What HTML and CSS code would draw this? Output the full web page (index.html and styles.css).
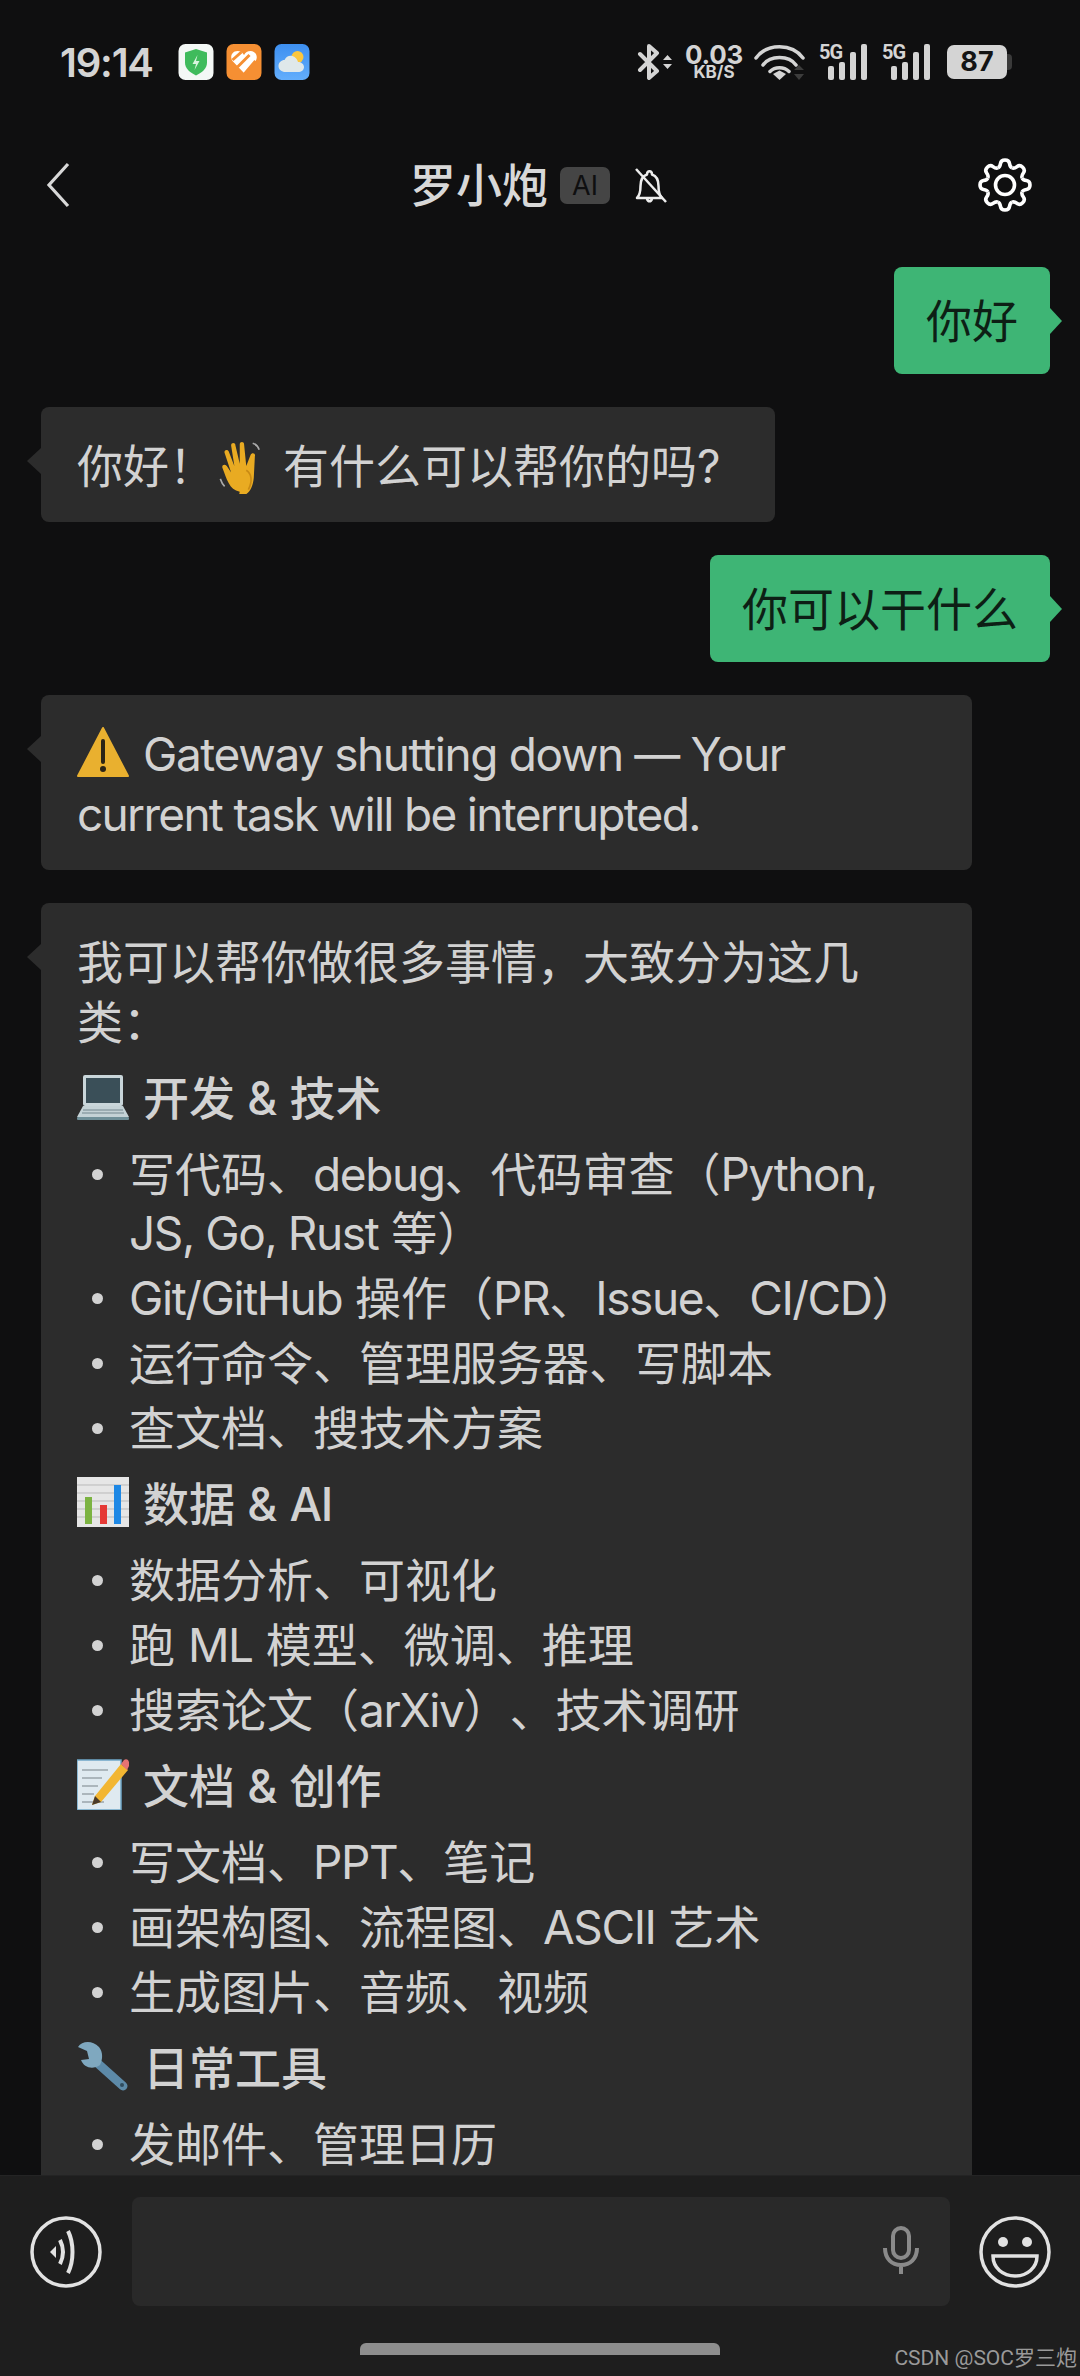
FILE: index.html
```html
<!DOCTYPE html>
<html lang="zh-CN">
<head>
<meta charset="utf-8">
<title>罗小炮</title>
<link rel="stylesheet" href="styles.css">
</head>
<body>
<div class="phone">
  <header class="status">
    <span class="time">19:14</span>
    <div class="apps">
      <svg class="app" viewBox="0 0 35 36"><rect width="35" height="36" rx="7" fill="#f4f8f6"/><path d="M17.500 5l11 3.500v10c0 6-5 10-11 13-6-3-11-7-11-13v-10z" fill="#3fbb5c"/><path d="M19 11l-5 9h3.500l-1.500 6 5-9h-3.500z" fill="#d8f5de"/></svg>
      <svg class="app" viewBox="0 0 35 36"><rect width="35" height="36" rx="7" fill="#f58f33"/><path d="M17.500 29L6 17c-3-4-.5-10 5-10 3 0 5 1.500 6.500 4 1.500-2.500 3.500-4 6.500-4 5.500 0 8 6 5 10z" fill="#fff"/><path d="M6 16l9-8M11 23l12-12M18 30l11-13" stroke="#f58f33" stroke-width="3" fill="none"/></svg>
      <svg class="app" viewBox="0 0 35 36"><defs><linearGradient id="sky" x1="0" y1="0" x2="0" y2="1"><stop offset="0" stop-color="#3d8ff0"/><stop offset="1" stop-color="#63aefc"/></linearGradient></defs><rect width="35" height="36" rx="7" fill="url(#sky)"/><circle cx="23" cy="13" r="6" fill="#fbc63d"/><path d="M11 28c-4 0-7-2.500-7-6s3-6 6-6c1.500-3.500 5-5 8-4 3 1 5 3.500 5.500 6 3 0 6 2 6 5s-2.500 5-6 5z" fill="#dfe8ea"/></svg>
    </div>
    <div class="sys">
      <svg class="bt" viewBox="0 0 36 36"><path d="M3 10l17 17-8 7V2l8 7L3 26" fill="none" stroke="#d4d4d4" stroke-width="4" stroke-linejoin="round" stroke-linecap="round"/><path d="M26 16l4.500-5 4.500 5zM26 20l4.500 5 4.500-5z" fill="#d4d4d4"/></svg>
      <div class="net"><span class="net-num">0.03</span><span class="net-unit">KB/S</span></div>
      <svg class="wifi" viewBox="0 0 51 36"><path d="M2 14C13-1 38-1 49 14M9 21c7-10 26-10 33 0M16 27.500c5-5 14-5 19 0" fill="none" stroke="#d4d4d4" stroke-width="3.500" stroke-linecap="round"/><path d="M19 30l6.500-3.500 6.500 3.500-6.500 6z" fill="#d4d4d4"/><path d="M40 26l5-5 5 5zM40 30l5 6 5-6z" fill="#3c3c3c"/></svg>
      <svg class="sig" viewBox="0 0 48 36"><text class="five" x="0" y="15">5G</text><rect x="9" y="22" width="6" height="14" rx="2" fill="#d4d4d4"/><rect x="20" y="18" width="6" height="18" rx="2" fill="#d4d4d4"/><rect x="31" y="8" width="6" height="28" rx="2" fill="#d4d4d4"/><rect x="42" y="0" width="6" height="36" rx="2" fill="#d4d4d4"/></svg>
      <svg class="sig" viewBox="0 0 48 36"><text class="five" x="0" y="15">5G</text><rect x="9" y="22" width="6" height="14" rx="2" fill="#d4d4d4"/><rect x="20" y="18" width="6" height="18" rx="2" fill="#d4d4d4"/><rect x="31" y="8" width="6" height="28" rx="2" fill="#d4d4d4"/><rect x="42" y="0" width="6" height="36" rx="2" fill="#d4d4d4"/></svg>
      <div class="batt"><span class="batt-body">87</span><span class="batt-cap"></span></div>
    </div>
  </header>

  <nav class="nav">
    <svg class="back" viewBox="0 0 24 46"><path d="M22 2L3 23l19 21" fill="none" stroke="#d8d8d8" stroke-width="3.200"/></svg>
    <div class="title">
      <span class="name">罗小炮</span>
      <span class="ai">AI</span>
      <svg class="bell" viewBox="0 0 33 36"><path d="M3 31c3-3 3.500-6 3.500-12C6.500 12 10 8.500 13 7.500 13 3 18 3 18 7.500c3 1 6.500 4.500 6.500 11.500 0 6 .5 9 3.500 12zM13 32c1 3 4 3 5 0" fill="none" stroke="#ededed" stroke-width="2.500" stroke-linejoin="round"/><path d="M2 2l30 33" stroke="#ededed" stroke-width="2.500"/></svg>
    </div>
    <svg class="gear" viewBox="0 0 56 56"><defs><path id="tooth" d="M20.920 10.910Q23 10 23.500 6.500 24 3 28 3T32.500 6.500Q33 10 35.080 10.910"/></defs><g fill="none" stroke="#fff" stroke-width="3.600" stroke-linejoin="round"><use href="#tooth"/><use href="#tooth" transform="rotate(45 28 28)"/><use href="#tooth" transform="rotate(90 28 28)"/><use href="#tooth" transform="rotate(135 28 28)"/><use href="#tooth" transform="rotate(180 28 28)"/><use href="#tooth" transform="rotate(225 28 28)"/><use href="#tooth" transform="rotate(270 28 28)"/><use href="#tooth" transform="rotate(315 28 28)"/><circle cx="28" cy="28" r="9.500"/></g></svg>
  </nav>

  <main class="chat">
    <div class="bubble me">你好</div>
    <div class="bubble bot short">你好！<svg class="emoji wave" viewBox="0 0 46 50"><path d="M20 48C10 46 8 36 4 26c-1-3 2-4 4-2l4 6L6 12c-1-3 3-4 4-1l5 13-3-19c0-3 4-3 4 0l4 17 0-18c0-3 4-3 4 0l2 20 4-10c1-3 5-2 4 1l-1 20c-1 10-5 17-14 17z" fill="#e9ab22"/><path d="M26 28c5 3 6 10 2 18" fill="none" stroke="#c98a14" stroke-width="1.500"/><path d="M2 36c1 3 2 5 4 7M32 3c3 1 5 3 6 6" fill="none" stroke="#aaa" stroke-width="1.500"/></svg>有什么可以帮你的吗<span class="lat">?</span></div>
    <div class="bubble me">你可以干什么</div>
    <div class="bubble bot wide"><svg class="emoji" viewBox="0 0 52 52"><path d="M26 2L51 50H1z" fill="#e9b02f" stroke="#e9b02f" stroke-width="2" stroke-linejoin="round"/><path d="M26 15v21" stroke="#2b2416" stroke-width="4" stroke-linecap="round"/><circle cx="26" cy="43" r="3" fill="#2b2416"/></svg><span class="lat">Gateway shutting down — Your</span> <span class="tight">current task will be interrupted.</span></div>
    <div class="bubble bot wide">
      <p class="para">我可以帮你做很多事情，大致分为这几类：</p>
      <h3 class="head"><svg class="emoji" viewBox="0 0 52 52"><rect x="6" y="5" width="40" height="31" rx="2" fill="#c9d6da"/><rect x="9" y="8" width="34" height="25" fill="#3a4f58"/><path d="M6 36h40l6 11H0z" fill="#c4d2d6"/><path d="M6 40h40M5 43h42" stroke="#8da0a6" stroke-width="1.500"/><rect y="47" width="52" height="3" rx="1" fill="#6f8f98"/></svg>开发 &amp; 技术</h3>
      <ul class="list">
        <li class="item"><span>写代码、<span class="lat">debug</span>、代码审查（<span class="lat">Python, JS, Go, Rust</span> 等）</span></li>
        <li class="item"><span><span class="lat">Git/GitHub</span> 操作（<span class="lat">PR</span>、<span class="lat">Issue</span>、<span class="lat">CI/CD</span>）</span></li>
        <li class="item"><span>运行命令、管理服务器、写脚本</span></li>
        <li class="item"><span>查文档、搜技术方案</span></li>
      </ul>
      <h3 class="head"><svg class="emoji" viewBox="0 0 52 52"><rect width="52" height="50" y="1" fill="#e6e6e6"/><path d="M0 9h52M0 17h52M0 25h52M0 33h52M0 41h52" stroke="#b9b9b9" stroke-width="1"/><rect x="8" y="21" width="7" height="27" fill="#7cb342"/><rect x="23" y="29" width="7" height="19" fill="#e53935"/><rect x="37" y="9" width="7" height="39" fill="#1e88e5"/></svg>数据 &amp; <span class="lat">AI</span></h3>
      <ul class="list">
        <li class="item"><span>数据分析、可视化</span></li>
        <li class="item"><span>跑 <span class="lat">ML</span> 模型、微调、推理</span></li>
        <li class="item"><span>搜索论文（<span class="lat">arXiv</span>）、技术调研</span></li>
      </ul>
      <h3 class="head"><svg class="emoji" viewBox="0 0 52 52"><rect y="2" width="44" height="50" fill="#dfeaf0" stroke="#6fa7c7" stroke-width="1.500"/><path d="M5 12h26M5 20h20M5 28h16M5 36h12M5 44h22" stroke="#9aa5aa" stroke-width="1.500"/><path d="M18 38l26-32 7 6-27 32-9 3z" fill="#f2b632"/><path d="M44 6l3-4c1-1 3-1 4 0l1 2c1 2 1 3 0 4l-2 4z" fill="#e57373"/><path d="M15 47l3-9 6 6z" fill="#4a3b2a"/></svg>文档 &amp; 创作</h3>
      <ul class="list">
        <li class="item"><span>写文档、<span class="lat">PPT</span>、笔记</span></li>
        <li class="item"><span>画架构图、流程图、<span class="lat">ASCII</span> 艺术</span></li>
        <li class="item"><span>生成图片、音频、视频</span></li>
      </ul>
      <h3 class="head"><svg class="emoji" viewBox="0 0 52 52"><path d="M17 20L46 46" stroke="#5d8aa8" stroke-width="9" stroke-linecap="round"/><path d="M22 7C15 0 5 1 1 7l9 4 2 8-8 1c3 8 12 10 19 5 3-6 3-13-1-18z" fill="#7fa8bf"/><circle cx="45" cy="45" r="2" fill="#2f4c5e"/></svg>日常工具</h3>
      <ul class="list">
        <li class="item"><span>发邮件、管理日历</span></li>
      </ul>
    </div>
  </main>

  <footer class="foot">
    <div class="bar">
      <svg class="round" viewBox="0 0 72 72"><circle cx="36" cy="36" r="34" fill="none" stroke="#e2e2e2" stroke-width="3.500"/><path d="M20 36l6-6 0 12z" fill="#e2e2e2"/><path d="M30 24c4 8 4 16 0 24M38 15c6 12 6 30 0 42" fill="none" stroke="#e2e2e2" stroke-width="4"/></svg>
      <div class="input"><svg class="mic" viewBox="0 0 36 48"><rect x="10" y="2" width="16" height="30" rx="8" fill="none" stroke="#8a8a8a" stroke-width="4"/><path d="M2 22c0 11 7 17 16 17s16-6 16-17M18 39v9" fill="none" stroke="#8a8a8a" stroke-width="4"/></svg></div>
      <svg class="round" viewBox="0 0 72 72"><circle cx="36" cy="36" r="34" fill="none" stroke="#e2e2e2" stroke-width="3.500"/><circle cx="24" cy="26" r="5" fill="#e2e2e2"/><circle cx="48" cy="26" r="5" fill="#e2e2e2"/><path d="M14 40h44c0 12-10 20-22 20s-22-8-22-20z" fill="none" stroke="#e2e2e2" stroke-width="3.500"/></svg>
    </div>
    <div class="home"></div>
    <span class="mark">CSDN @SOC罗三炮</span>
  </footer>
</div>
</body>
</html>
```
FILE: styles.css
```css
* { box-sizing: border-box; }
html, body { margin: 0; padding: 0; background: #0f0f10; }
body { font-family: "Inter", "Noto Sans CJK SC", sans-serif; text-spacing-trim: space-all; }
.phone {
  width: 1080px;
  height: 2376px;
  display: flex;
  flex-direction: column;
  overflow: hidden;
  position: relative;
  background: #0f0f10;
  color: #d2d2d2;
}

/* status bar */
.status {
  height: 124px;
  flex: none;
  display: flex;
  align-items: center;
  padding: 0 68px 0 60px;
}
.time { width: 94px; font-size: 40px; font-weight: 600; letter-spacing: -1.200px; color: #d4d4d4; white-space: nowrap; }
.apps { display: flex; gap: 12px; margin-left: 24px; }
.app { width: 36px; height: 36px; display: block; }
.sys { margin-left: auto; display: flex; align-items: center; height: 36px; }
.bt { width: 36px; height: 36px; }
.net { width: 58px; margin-left: 12px; display: flex; flex-direction: column; align-items: center; color: #d4d4d4; font-weight: 700; }
.net-num { font-size: 26px; line-height: 21px; letter-spacing: -.300px; }
.net-unit { font-size: 17px; line-height: 15px; }
.wifi { width: 51px; height: 36px; margin-left: 11px; }
.sig { width: 48px; height: 36px; margin-left: 14px; }
.sig + .sig { margin-left: 15px; }
.five { font-family: "Roboto", sans-serif; font-size: 20px; font-weight: 700; letter-spacing: -1px; fill: #d4d4d4; }
.batt { display: flex; align-items: center; margin-left: 17px; }
.batt-body { width: 60px; height: 34px; border-radius: 7px; background: #d4d4d4; color: #141414; font-size: 27px; font-weight: 700; line-height: 34px; text-align: center; }
.batt-cap { width: 5px; height: 16px; border-radius: 0 4px 4px 0; background: #3a3a3a; }

/* nav */
.nav {
  height: 122px;
  flex: none;
  display: flex;
  align-items: center;
  justify-content: space-between;
  padding: 0 47px 0 46px;
}
.back { width: 24px; height: 46px; }
.title { display: flex; align-items: center; margin-left: 30px; }
.name { font-size: 46px; line-height: 60px; font-weight: 500; color: #d8d8d8; }
.ai { width: 50px; height: 37px; margin-left: 12px; border-radius: 7px; background: #454545; color: #0f0f10; font-size: 27px; line-height: 37px; text-align: center; }
.bell { width: 33px; height: 36px; margin-left: 24px; }
.gear { width: 56px; height: 56px; }

/* chat */
.chat {
  flex: 1;
  min-height: 0;
  overflow: hidden;
  display: flex;
  flex-direction: column;
  align-items: flex-start;
  gap: 33px;
  padding: 21px 30px 0 41px;
}
.bubble {
  position: relative;
  flex: none;
  border-radius: 8px;
  font-size: 46px;
  line-height: 60px;
}
.lat { letter-spacing: -1.400px; }
.tight { letter-spacing: -1.700px; }
.bot { max-width: 931px; padding: 29px 36px 26px; background: #2c2c2c; color: #d2d2d2; }
.bot::before {
  content: "";
  position: absolute;
  left: -14px;
  top: 41px;
  width: 14px;
  height: 26px;
  background: #2c2c2c;
  clip-path: polygon(100% 0, 0 50%, 100% 100%);
}
.short { padding-right: 56px; }
.me { align-self: flex-end; padding: 24px 32px 23px; background: #3eb575; color: #0d1f15; }
.me::after {
  content: "";
  position: absolute;
  right: -12px;
  top: 41px;
  width: 12px;
  height: 26px;
  background: #3eb575;
  clip-path: polygon(0 0, 100% 50%, 0 100%);
}
.wide { width: 931px; }
.para { margin: 0; max-width: 810px; line-height: 60px; }
.head { margin: 17px 0; font-size: 46px; line-height: 59px; font-weight: 500; }
.list { list-style: none; margin: 0; padding: 0; display: flex; flex-direction: column; gap: 6px; line-height: 59px; }
.item { display: flex; }
.item::before {
  content: "";
  flex: none;
  width: 11px;
  height: 11px;
  margin: 24px 26px 0 15px;
  border-radius: 50%;
  background: #d2d2d2;
}
.emoji { width: 52px; height: 52px; margin-right: 14px; vertical-align: -7px; }
.wave { width: 52px; height: 54px; margin: 0 14px 0 2px; vertical-align: -11px; }

/* footer */
.foot {
  height: 201px;
  flex: none;
  position: relative;
  background: #1e1e1e;
  padding-top: 21px;
  border-top: 1px solid #242424;
}
.bar { display: flex; align-items: center; justify-content: space-between; padding: 0 29px 0 30px; }
.round { width: 72px; height: 72px; }
.input { width: 818px; height: 109px; border-radius: 8px; background: #292929; display: flex; align-items: center; justify-content: flex-end; padding: 0 31px 4px 0; }
.mic { width: 36px; height: 48px; }
.home { width: 360px; height: 12px; margin: 37px auto 0; border-radius: 6px 6px 0 0; background: #8e8e8e; }
.mark { position: absolute; right: 3px; bottom: 6px; font-size: 21px; line-height: 24px; color: #9a9a9a; white-space: nowrap; font-family: "Roboto", "Noto Sans CJK SC", sans-serif; }
```
